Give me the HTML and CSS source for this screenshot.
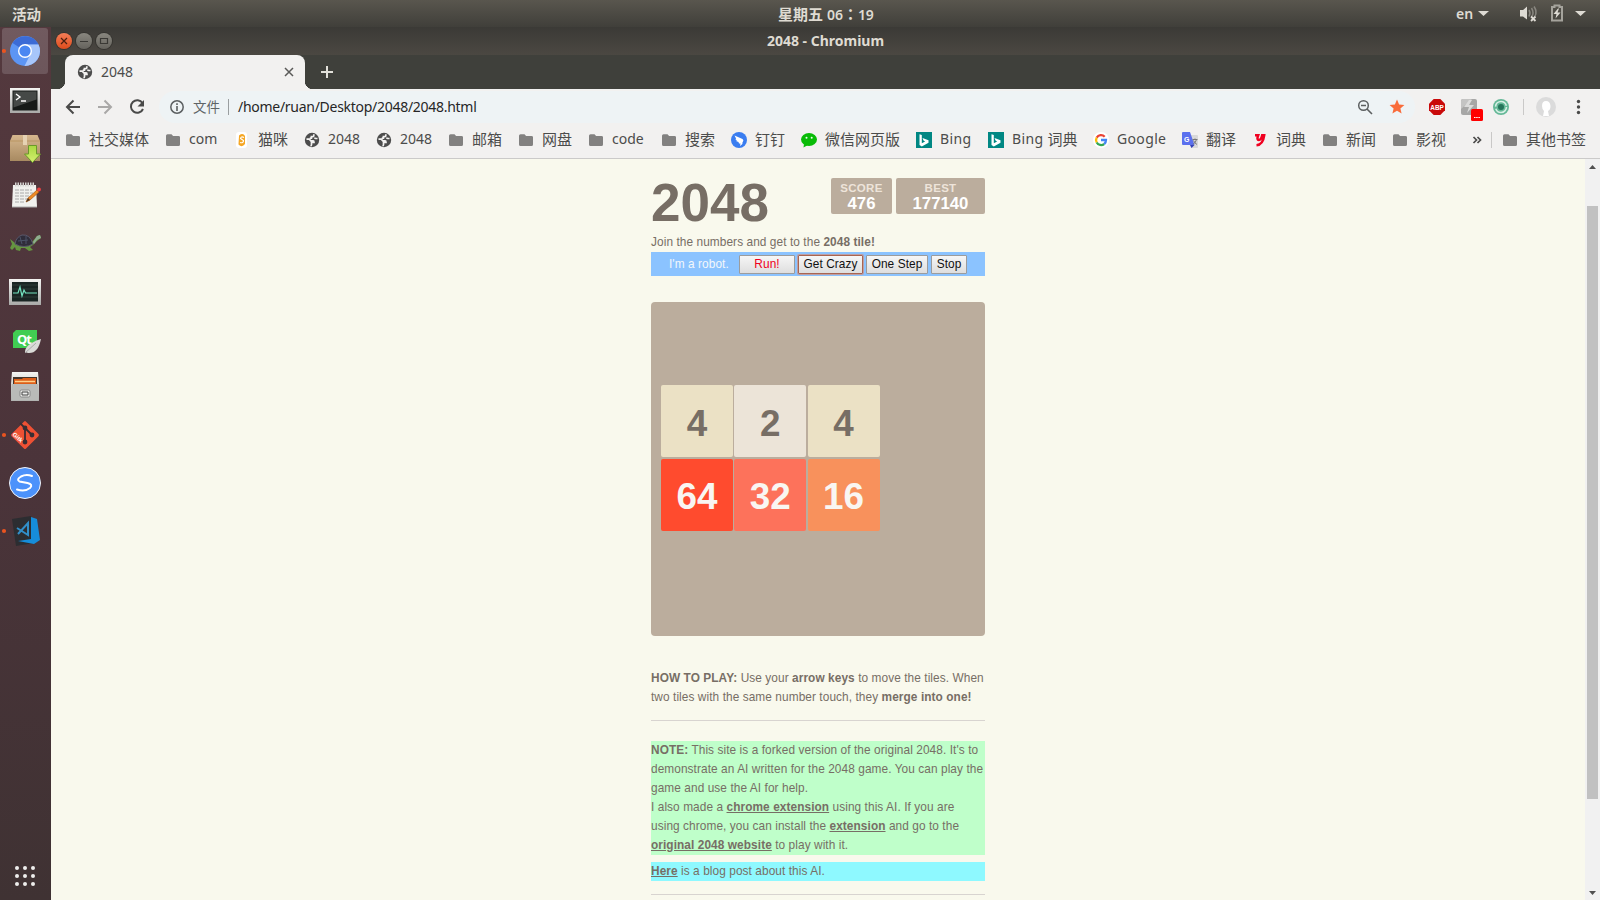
FILE: index.html
```html
<!DOCTYPE html>
<html lang="zh-CN">
<head>
<meta charset="utf-8">
<title>2048</title>
<link rel="stylesheet" href="styles.css">
</head>
<body>
<svg class="defs" width="0" height="0">
  <defs>
    <symbol id="globe" viewBox="0 0 16 16"><circle cx="8" cy="8" r="7.2" fill="#4c4c4c"/><path d="M2.500 7.200h2.800l1.500 1.700h2.400q.8 0 .8 1.500H7.500v2.300q0 .8-1 1.200M9.800 2.300v1.400q0 .9-1 .9H7.400v1.500H5.800M13.500 6.500h-1.700L10.300 6" fill="none" stroke="#f2f1f0" stroke-width="1.700"/></symbol>
    <symbol id="folder" viewBox="0 0 16 16"><path d="M1 3.800Q1 2.200 2.500 2.200h4l1.600 1.700h5.400Q15 3.900 15 5.300v7.200q0 1.500-1.500 1.500h-11Q1 14 1 12.500z" fill="#828180"/></symbol>
    <symbol id="bing" viewBox="0 0 16 16"><path d="M0 0h16v16H0z" fill="#018783"/><path d="M3.500 2.200 5.800 3v8.300l3.300-1.900-1.600-.8-1-2.500 6 2.100v2.500l-6.700 3.700-2.300-1.300z" fill="#fff"/></symbol>
    <linearGradient id="steel" x2="0" y2="1"><stop stop-color="#f4f4f2"/><stop offset="1" stop-color="#a9aaa8"/></linearGradient>
    <linearGradient id="box" x2="0" y2="1"><stop stop-color="#d6b78e"/><stop offset="1" stop-color="#a88a61"/></linearGradient>
    <linearGradient id="lime" x2="0" y2="1"><stop stop-color="#a8d840"/><stop offset="1" stop-color="#d5ef70"/></linearGradient>
  </defs>
</svg>
<header class="panel">
  <span class="activities">活动</span>
  <span class="clock"><span class="day">星期五</span><b>06<span class="colon">：</span>19</b></span>
  <div class="tray">
    <span class="lang">en</span>
    <svg width="145" height="27" viewBox="0 0 145 27"><g fill="#dedbd4"><path d="M13 11h11l-5.500 5zM110 11h11l-5.500 5z"/><path d="M55 10h3l4-3.500v13L58 16.500h-3z"/></g><path d="M64 10q2 3 0 6.500M66.500 8q3 5 0 9M69 6.500q3.500 5 1 9.500" fill="none" stroke="#898780" stroke-width="1.500"/><path d="m66 16.500 4.500 4.500m0-4.500-4.500 4.500" stroke="#dedbd4" stroke-width="1.800"/><path d="M87 7h2.500V5.500h5V7H97v13.500H87z" fill="none" stroke="#a5a39c" stroke-width="2"/><path d="m93 8.500-4.500 5.500h3L90.500 18.500l5-6h-3l1.500-4z" fill="#dedbd4"/></svg>
  </div>
</header>
<div class="desktop">
<aside class="dock">
  <div class="app active"><svg viewBox="0 0 51 48"><circle cx="25" cy="24" r="15" fill="#5c95f4"/><path d="M25 24 12.500 16A15 15 0 0 1 38.500 17.500H25z" fill="#3b6bd6"/><path d="M25 17.500h13.500A15 15 0 0 1 24.500 39l6-12z" fill="#a7c6fb"/><circle cx="25" cy="24" r="7" fill="#fff"/><circle cx="25" cy="24" r="5.600" fill="#4a87f2"/><circle cx="4" cy="24" r="2.100" fill="#e95420"/></svg></div>
  <div class="app"><svg viewBox="0 0 51 48"><path d="M10 13h30v25H10z" fill="url(#steel)"/><path d="M12.500 15.500h25v20h-25z" fill="#161a18"/><path d="M13.500 16.500h23v8l-23 8z" fill="#454947"/><path d="m16 19 4 3-4 3M21 26h5" fill="none" stroke="#fff" stroke-width="1.400"/></svg></div>
  <div class="app"><svg viewBox="0 0 51 48"><path d="M12.500 12h25l2.500 6v20H10V18z" fill="url(#box)"/><path d="M10 18h30" stroke="#b99563"/><path d="M23 12h4v10h-4z" fill="#e6d2b3"/><path d="M28.500 22.500h8V31h4l-8 8.500-8-8.500h4z" fill="url(#lime)" stroke="#6a982a"/></svg></div>
  <div class="app"><svg viewBox="0 0 51 48"><path d="M13 14h23l1 22H12z" fill="#f1f1ee"/><path d="M12 36h25" stroke="#aaa"/><path d="M15 13.500h20" stroke="#d5d5d2" stroke-width="4" stroke-dasharray="1.500 1"/><path d="M15 19h17M15 22h18M15 25h15M15 28h12M15 31h10" stroke="#aaa" stroke-dasharray="4 1"/><path d="m26 31 2-4 9-8 2 2-9 8z" fill="#f08a24" stroke="#a85914" stroke-width=".7"/><path d="m26 31 2-4 2 2z" fill="#4b392c"/><circle cx="39" cy="18.500" r="2" fill="#e84242"/></svg></div>
  <div class="app"><svg viewBox="0 0 51 48"><path d="m10 20 5 4q10 4 17-1l5-6 3-1 1 3-4 3-4 4-3 2 3 3-4 1-4-3h-4l-1 3-4-1-1-3-3 3-2-2 2-4z" fill="#659541"/><path d="M15 25q1-7 7-9 8-1 11 9-9 5-18 0z" fill="#302d3a" stroke="#5a586b"/><path d="m20 18 2 7M26 17v8M18 22l10-1" stroke="#4c5368"/><path d="m33 23 4-6 3-1 1 3-4 2-3 4z" fill="#8fac91"/></svg></div>
  <div class="app"><svg viewBox="0 0 51 48"><path d="M9 12h32v26H9z" fill="url(#steel)"/><path d="M12 15h26v19.500H12z" fill="#192523"/><path d="M12 18h26M12 22h26M12 30h26" stroke="#2e3d39"/><path d="M13 26h5l2-6 2 9 2-6 1.500 3H37" fill="none" stroke="#74e4c0" stroke-width="1.200"/></svg></div>
  <div class="app"><svg viewBox="0 0 51 48"><path d="M16 15h21v18H13V18z" fill="#41cd52"/><text x="17" y="29" class="qt">Qt</text><path d="M25 37q0-8 16-13-3 15-13 14z" fill="#dadbd7"/><path d="m25 38 11-10" stroke="#aaa"/></svg></div>
  <div class="app"><svg viewBox="0 0 51 48"><path d="M12 9h26l1 12v17H11V21z" fill="url(#steel)"/><path d="M13 14h24v7H13z" fill="#43352c"/><path d="M14 16h8l1-1h13v6H14z" fill="#dc5d19"/><path d="M15 18.500h20" stroke="#ffd08c" stroke-width="1.500"/><path d="M11.500 21h27v16.500h-27z" fill="#b9bab8"/><rect x="20" y="27" width="10" height="7" rx="1.500" fill="#e7e7e5" stroke="#888"/><path d="M22 29h6v3h-6z" fill="#eee" stroke="#444"/></svg></div>
  <div class="app"><svg viewBox="0 0 51 48"><rect x="14.800" y="13.800" width="20.500" height="20.500" rx="1.500" transform="rotate(45 25 24)" fill="#ee5134"/><path d="m20 12 5 5v14M25 17l7 7" fill="none" stroke="#382e33" stroke-width="1.800"/><g fill="#382e33"><circle cx="25" cy="17" r="2.400"/><circle cx="32" cy="24" r="2.400"/><circle cx="25" cy="31" r="2.400"/></g><text x="12" y="24" class="gitk" transform="rotate(42 12 24)">Gitk</text><circle cx="4" cy="24" r="2.100" fill="#e95420"/></svg></div>
  <div class="app"><svg viewBox="0 0 51 48"><circle cx="25" cy="24" r="15.500" fill="#4c92fb" stroke="#f3f5f9"/><path d="M32 17q-6-2-11 .5-5 3-1.500 5l8 1.500q6 1.500 2.500 5-5 4-13 1.500" fill="none" stroke="#fff" stroke-width="2" stroke-linecap="round"/></svg></div>
  <div class="app"><svg viewBox="0 0 51 48"><path d="m12 12 19-3 3 27-18 3z" fill="#2c2d31"/><path d="m31 10 6 2 3 21-6 4-16-3 13-2z" fill="#168dda"/><path d="m17 21 11 7V16L18 27" fill="none" stroke="#318fc9" stroke-width="2"/><circle cx="4" cy="24" r="2.100" fill="#e95420"/></svg></div>
  <svg class="grid9" viewBox="0 0 51 48"><g fill="#eeeeec"><circle cx="17" cy="16" r="2"/><circle cx="25" cy="16" r="2"/><circle cx="33" cy="16" r="2"/><circle cx="17" cy="24" r="2"/><circle cx="25" cy="24" r="2"/><circle cx="33" cy="24" r="2"/><circle cx="17" cy="32" r="2"/><circle cx="25" cy="32" r="2"/><circle cx="33" cy="32" r="2"/></g></svg>
</aside>
<main class="window">
  <div class="titlebar">
    <div class="controls">
      <svg class="ctl close" viewBox="0 0 16 16"><path d="m5 5 6 6m0-6-6 6"/></svg>
      <svg class="ctl" viewBox="0 0 16 16"><path d="M4 8.500h8"/></svg>
      <svg class="ctl" viewBox="0 0 16 16"><path d="M4.500 5.500h7v5h-7z"/></svg>
    </div>
    <span class="wtitle">2048 - Chromium</span>
  </div>
  <div class="tabs">
    <div class="tab"><svg width="16" height="16"><use href="#globe"/></svg><span>2048</span><svg class="x" width="10" height="10"><path d="m1 1 8 8m0-8-8 8" stroke="#5a5a58" stroke-width="1.500"/></svg></div>
    <svg class="plus" width="12" height="12"><path d="M6 0v12M0 6h12" stroke="#e2e1da" stroke-width="2"/></svg>
  </div>
  <div class="toolbar">
    <svg class="nav" width="100" height="32" viewBox="0 0 100 32"><g fill="none" stroke-width="2"><path d="M29 16H16m6.500-6.500L16 16l6.500 6.500" stroke="#4a4a49"/><path d="M47 16h13m-6.500-6.500L60 16l-6.500 6.500" stroke="#a9a8a7"/><path d="M91.500 12A6.300 6.300 0 1 0 92 18" stroke="#4a4a49"/></g><path d="M93 9v6.500h-6.500z" fill="#4a4a49"/></svg>
    <div class="omni">
      <svg width="14" height="14"><circle cx="7" cy="7" r="6.200" fill="none" stroke="#5b5f61" stroke-width="1.500"/><path d="M7 6v5M7 3.200V5" stroke="#5b5f61" stroke-width="1.600"/></svg>
      <span class="scheme">文件</span><i></i><span class="url">/home/ruan/Desktop/2048/2048.html</span>
      <svg class="omni-end" width="48" height="20" viewBox="0 0 48 20"><circle cx="6.500" cy="8.500" r="4.800" fill="none" stroke="#5c5f60" stroke-width="1.500"/><path d="M4 8.500h5M10 12l5 5" stroke="#5c5f60" stroke-width="1.600"/><path d="m40 2.500 2.100 4.900 5.300.5-4 3.500 1.200 5.200-4.600-2.800-4.600 2.800 1.200-5.200-4-3.500 5.300-.5z" fill="#f96c3b"/></svg>
    </div>
    <svg class="exts" width="170" height="32" viewBox="0 0 170 32">
      <path d="M10.700 8h6.600l4.700 4.700v6.600L17.300 24h-6.600L6 19.300v-6.600z" fill="#c90a0a"/><text x="7.300" y="18.800" class="abp" textLength="13.500" lengthAdjust="spacingAndGlyphs">ABP</text>
      <rect x="38" y="8" width="16" height="16" rx="2" fill="#a7a7a6"/><path d="M38 18V10q0-2 2-2h9z" fill="#c4c4c3"/><path d="m46 9-5 7h5l-2 6 7-8h-5l3-5z" fill="#dcdcdb"/><rect x="48" y="18" width="12" height="12" rx="1.500" fill="#f00"/><path d="M51 26.500h6" stroke="#fff" stroke-dasharray="1.500 .7"/>
      <circle cx="78" cy="16" r="8" fill="#65b897"/><circle cx="78" cy="16" r="5.500" fill="none" stroke="#d8efe5" stroke-width="1.600" stroke-dasharray="15 2.300"/><circle cx="78" cy="16" r="3" fill="#25745a"/><path d="M100.500 8v16" stroke="#cac9c8"/>
      <circle cx="123" cy="16" r="10" fill="#dbdbdb"/><path d="M119 15q0-5 4-5t4.500 5q0 4-2.500 5l1 5h-6l1-5q-2-2-2-5z" fill="#fff"/><g fill="#4a4a49"><circle cx="155.500" cy="10.500" r="1.700"/><circle cx="155.500" cy="16" r="1.700"/><circle cx="155.500" cy="21.500" r="1.700"/></g>
    </svg>
  </div>
  <nav class="bookmarks">
    <a><svg><use href="#folder"/></svg><span class="cjk">社交媒体</span></a>
    <a><svg><use href="#folder"/></svg><span>com</span></a>
    <a><svg viewBox="0 0 16 16"><rect x="2" y="0" width="11" height="16" rx="3" fill="#fff"/><path d="M5 3.500q4-3 6 .5v8q-3 4-6.500.500z" fill="#f5a623"/><path d="M10 5.500q-3-1.500-3.500 1l3 2q0 3-3.500 2" fill="none" stroke="#fff" stroke-width="1.200"/></svg><span class="cjk">猫咪</span></a>
    <a><svg><use href="#globe"/></svg><span>2048</span></a>
    <a><svg><use href="#globe"/></svg><span>2048</span></a>
    <a><svg><use href="#folder"/></svg><span class="cjk">邮箱</span></a>
    <a><svg><use href="#folder"/></svg><span class="cjk">网盘</span></a>
    <a><svg><use href="#folder"/></svg><span>code</span></a>
    <a><svg><use href="#folder"/></svg><span class="cjk">搜索</span></a>
    <a><svg viewBox="0 0 16 16"><circle cx="8" cy="8" r="8" fill="#3a7df0"/><path d="m3.500 3.500 8 3.500q1.500 1 .5 2.500l-1 2h1L9 14l.5-2.500H8L7.500 10 5 9l1-.5L4.200 7l1-.3z" fill="#fff"/></svg><span class="cjk">钉钉</span></a>
    <a><svg viewBox="0 0 16 16"><ellipse cx="8" cy="7.500" rx="8" ry="6.500" fill="#09bb07"/><path d="m3 12-.5 3.500L7 13z" fill="#09bb07"/><circle cx="5.500" cy="5.800" r="1" fill="#eaffea"/><circle cx="10.700" cy="5.800" r="1" fill="#eaffea"/></svg><span class="cjk">微信网页版</span></a>
    <a><svg><use href="#bing"/></svg><span class="bing">Bing</span></a>
    <a><svg><use href="#bing"/></svg><span class="bing">Bing&nbsp;</span><span class="cjk">词典</span></a>
    <a><svg viewBox="0 0 16 16"><circle cx="8" cy="8" r="8" fill="#fff"/><g fill="none" stroke-width="2.300"><path d="M11.700 4.700A5 5 0 0 0 3.700 5.600" stroke="#ea4335"/><path d="M3.700 5.600a5 5 0 0 0 0 4.900" stroke="#fbbc05"/><path d="M3.700 10.500a5 5 0 0 0 7.500 1.500" stroke="#34a853"/><path d="M11.200 12Q13 10.500 13 8H8" stroke="#4285f4"/></g></svg><span class="goog">Google</span></a>
    <a><svg viewBox="0 0 16 16"><path d="M6 3h9q1 0 1 1v11q0 1-1 1H9z" fill="#d9d9d9"/><path d="M1 0h7l4.500 13H1q-1 0-1-1V1q0-1 1-1z" fill="#5b70ee"/><path d="M8 13h4.500L9.500 16z" fill="#3440b8"/><text x="2" y="9.500" class="tr">G</text><path d="M10.500 7.500h5M13 6.500v1M14.500 7.500Q14 10 11 12.500m.5-4q1 2.500 3.500 4" fill="none" stroke="#777"/></svg><span class="cjk">翻译</span></a>
    <a><svg viewBox="0 0 16 16"><path d="M3 3.300h3.200q-1.800 4.700.7 4.700 2.300 0 3.300-4.700h2q-1.200 9.400-7.700 9.900" fill="none" stroke="#f00020" stroke-width="2.500"/></svg><span class="cjk">词典</span></a>
    <a><svg><use href="#folder"/></svg><span class="cjk">新闻</span></a>
    <a><svg><use href="#folder"/></svg><span class="cjk">影视</span></a>
    <svg class="more" width="20" height="16" viewBox="0 0 20 16"><path d="m1.500 5 3 3-3 3m4-6 3 3-3 3" fill="none" stroke="#4a4a49" stroke-width="1.700"/><path d="M19.500 0v16" stroke="#c9c8c7"/></svg>
    <a><svg><use href="#folder"/></svg><span class="cjk">其他书签</span></a>
  </nav>
  <div class="viewport">
    <section class="page">
      <div class="heading">
        <h1>2048</h1>
        <div class="scores"><div class="score s1"><small>SCORE</small>476</div><div class="score s2"><small>BEST</small>177140</div></div>
      </div>
      <p class="intro">Join the numbers and get to the <b>2048 tile!</b></p>
      <div class="robot"><span>I'm a robot.</span><button class="run">Run!</button><button class="crazy">Get Crazy</button><button class="step">One Step</button><button class="stop">Stop</button></div>
      <div class="board">
        <div class="tile t4">4</div><div class="tile t2">2</div><div class="tile t4">4</div>
        <div class="tile t64">64</div><div class="tile t32">32</div><div class="tile t16">16</div>
      </div>
      <p class="how"><b>HOW TO PLAY:</b> Use your <b>arrow keys</b> to move the tiles. When<br>two tiles with the same number touch, they <b>merge into one!</b></p>
      <hr>
      <p class="note"><b>NOTE:</b> This site is a forked version of the original 2048. It's to<br>demonstrate an AI written for the 2048 game. You can play the<br>game and use the AI for help.<br>I also made a <u>chrome extension</u> using this AI. If you are<br>using chrome, you can install the <u>extension</u> and go to the<br><u>original 2048 website</u> to play with it.</p>
      <p class="blog"><u>Here</u> is a blog post about this AI.</p>
      <hr class="last">
    </section>
    <div class="scrollbar"><svg width="15" height="15"><path d="M4 10h7L7.500 6z" fill="#505050"/></svg><div class="thumb"></div><svg width="15" height="15"><path d="M4 6h7l-3.500 4z" fill="#505050"/></svg></div>
  </div>
</main>
</div>
</body>
</html>
```
FILE: styles.css
```css
* { box-sizing: border-box; }
body { margin: 0; width: 1600px; height: 900px; overflow: hidden; font-family: "Noto Sans", "Noto Sans CJK SC", sans-serif; }
svg { display: block; flex: none; }
.defs { position: absolute; }
p, h1 { margin: 0; }

.panel { height: 27px; overflow: hidden; background: linear-gradient(#59564e, #403f3a); color: #dfdbd2; display: grid; grid-template-columns: 778px 100px 1fr; align-items: center; font-size: 14px; white-space: nowrap; }
.activities { padding-left: 12px; font: 600 14.5px "Noto Sans CJK SC", sans-serif; }
.clock { display: flex; align-items: center; line-height: 20px; padding-top: 1px; }
.day { font: 600 15px/20px "Noto Sans CJK SC", sans-serif; margin-right: 4px; }
.clock b { font-weight: 600; letter-spacing: -.05px; }
.colon { font-family: "Noto Sans CJK TC", sans-serif; font-size: 15px; }
.tray { display: flex; align-items: center; justify-content: flex-end; }
.lang { font-weight: 600; font-size: 14px; width: 20px; margin-right: -11px; }
.tray svg { margin-right: -10px; }

.desktop { display: flex; height: 873px; }
.dock { width: 51px; display: flex; flex-direction: column; background: linear-gradient(#54393e, #4b343a 50%, #3f3233); }
.app { height: 48px; }
.app svg, .grid9 { width: 51px; height: 48px; }
.active svg { background: linear-gradient(#715a5f, #6c565b); clip-path: inset(1px 3px 1px 2px round 3px); }
.grid9 { margin-top: auto; }
.qt { font: bold 13px "Open Sans", sans-serif; fill: #fff; letter-spacing: -1px; }
.gitk { font: bold 6px "Liberation Sans", sans-serif; fill: #fff; }

.window { width: 1549px; display: flex; flex-direction: column; }
.titlebar { height: 28px; background: linear-gradient(#3b3a36, #4b4842); display: grid; grid-template-columns: 1fr 120px 1fr; align-items: center; }
.controls { display: flex; gap: 4px; padding-left: 5px; }
.ctl { width: 16px; height: 16px; border-radius: 50%; background: linear-gradient(#89877f, #65635d); box-shadow: 0 0 0 1px #353430; fill: none; stroke: #3a3935; stroke-width: 1.2; }
.close { background: linear-gradient(#f47d57, #de4c1c); stroke: #4b1f10; }
.wtitle { color: #dfdbd2; font-size: 14px; font-weight: 700; text-align: center; white-space: nowrap; padding-bottom: 2px; }

.tabs { height: 34px; background: #3f403b; display: flex; align-items: center; padding-left: 14px; }
.tab { position: relative; width: 240px; height: 34px; background: #f2f1f0; border-radius: 8px 8px 0 0; display: flex; align-items: center; padding: 0 11px 0 12px; font-size: 14px; color: #4c4c4b; }
.tab::before, .tab::after { content: ""; position: absolute; bottom: 0; width: 8px; height: 8px; }
.tab::before { left: -8px; background: radial-gradient(circle at 0 0, #3f403b 8px, #f2f1f0 8.5px); }
.tab::after { right: -8px; background: radial-gradient(circle at 100% 0, #3f403b 8px, #f2f1f0 8.5px); }
.tab span { margin-left: 8px; padding-bottom: 2px; }
.x { margin-left: auto; }
.plus { margin-left: 16px; }

.toolbar { height: 36px; background: #f2f1f0; display: flex; align-items: flex-start; padding-top: 2px; }
.nav { margin-right: 8px; }
.omni { width: 1256px; height: 32px; border-radius: 16px; background: #eef3f5; display: flex; align-items: center; padding-left: 11px; font-size: 14px; }
.scheme { font: 13.5px "Noto Sans CJK SC", sans-serif; color: #5e6466; margin-left: 9px; width: 28px; padding-bottom: 2px; }
.omni i { width: 1px; height: 16px; background: #9a9ea0; margin: 0 9px 0 7px; }
.url { color: #262626; white-space: nowrap; letter-spacing: -.28px; padding-bottom: 2px; }
.omni-end { margin-left: auto; margin-right: 10px; }
.exts { margin-left: 8px; }
.abp { font: bold 7.5px "Liberation Sans", sans-serif; fill: #fff; }
.bookmarks { height: 34px; background: #f2f1f0; border-bottom: 1px solid #cbcac9; padding: 0 0 4px 14px; display: grid; align-items: center; grid-template-columns: 100px 69px 70px 72px 72px 70px 70px 73px 70px 70px 115px 72px 105px 89px 70px 70px 70px 80px 30px 1fr; font-size: 14px; color: #4c4c4b; white-space: nowrap; }
.bookmarks a { display: flex; align-items: center; height: 22px; line-height: 22px; }
.bookmarks a > svg { width: 16px; height: 16px; margin-right: 8px; }
.bookmarks span { padding-bottom: 1px; }
.cjk { font: 15px/22px "Noto Sans CJK SC", sans-serif; }
.bing { letter-spacing: .35px; }
.goog { letter-spacing: .35px; }
.tr { font: bold 7px "Liberation Sans", sans-serif; fill: #fff; }

.viewport { flex: 1; min-height: 0; display: flex; background: #f9f9ed; overflow: hidden; }
.page { width: 334px; margin: 0 auto; color: #776e65; font: 11.85px/19px "Liberation Sans", Arial, sans-serif; letter-spacing: .08px; white-space: nowrap; padding-top: 19px; }
.heading { display: flex; justify-content: space-between; height: 54px; letter-spacing: 0; }
h1 { font-size: 53px; line-height: 50px; }
.scores { display: flex; gap: 4px; }
.score { height: 36px; background: #bbad9d; border-radius: 2px; text-align: center; color: #fff; font-size: 16.75px; font-weight: bold; line-height: 17px; padding-top: 4px; }
.score small { display: block; font-size: 11.5px; line-height: 12px; height: 13px; letter-spacing: .3px; color: #eee4da; }
.s1 { width: 61px; }
.s2 { width: 89px; }
.intro { height: 20px; line-height: 21px; }
.robot { height: 24px; background: #8bc3ff; display: flex; align-items: center; color: #f3f7fb; }
.robot span { margin-left: 18px; width: 70px; }
button { height: 19px; padding: 0; border: 1px solid #9c9c9c; border-radius: 1px; background: linear-gradient(#f6f6f6, #dedede); font: 11.85px "Liberation Sans", Arial, sans-serif; letter-spacing: .08px; color: #111; margin-right: 3px; }
.run { width: 56px; color: #f00020; }
.crazy { width: 65px; border-color: #a96450; box-shadow: 0 0 0 1px #e5835e90; }
.step { width: 62px; }
.stop { width: 36px; }
.board { margin-top: 26px; height: 334px; border-radius: 4px; background: #bbad9d; padding: 83px 10px; display: grid; grid-template: 72px 72px / 72px 72px 72px; gap: 1.6px 1.3px; letter-spacing: 0; }
.tile { border-radius: 2px; display: flex; align-items: center; justify-content: center; font-size: 36.85px; font-weight: bold; padding-top: 4px; }
.t2 { background: #ece4d8; }
.t4 { background: #ebe1c5; }
.t16 { background: #f8915c; color: #f9f6f2; }
.t32 { background: #fd725b; color: #f9f6f2; }
.t64 { background: #ff4b2e; color: #f9f6f2; }
.how { margin-top: 33px; }
hr { border: 0; height: 1px; background: #d8d4d0; margin: 13px 0 20px; }
.note { background: #bfffca; }
.blog { background: #8ef9ff; margin-top: 7px; }
u { font-weight: bold; }
.scrollbar { width: 15px; background: #f1f1f1; display: flex; flex-direction: column; justify-content: space-between; align-items: center; }
.thumb { width: 11px; height: 593px; background: #c1c1c1; margin: 32px 0 auto; }
```
